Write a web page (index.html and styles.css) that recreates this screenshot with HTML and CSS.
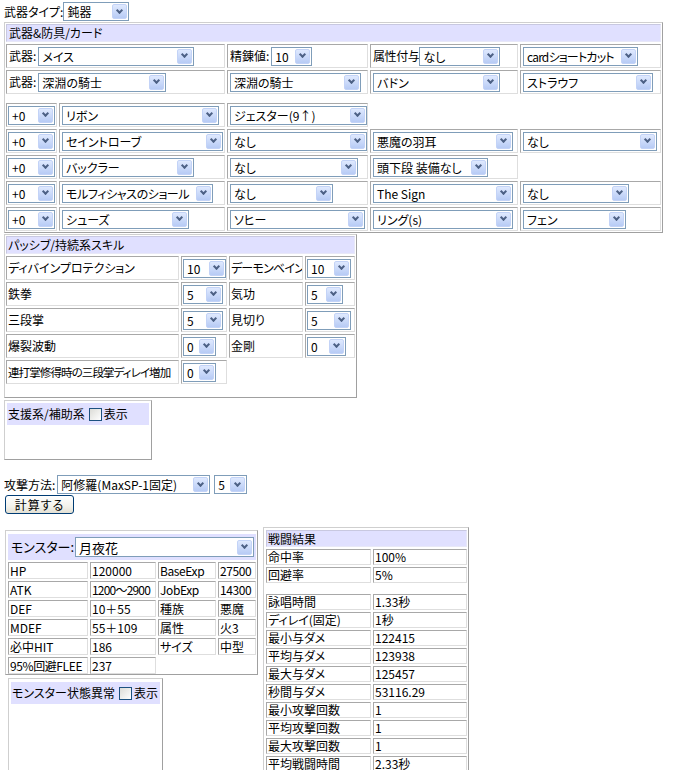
FILE: index.html
```html
<html lang="ja">
<head>
  <meta charset="UTF-8" />
  <title>計算機</title>
  <link rel="stylesheet" href="styles.css">
</head>
<body>

<!-- 武器タイプ -->
<div class="line">
  <label>武器タイプ:</label>
  <div class="sel w66"><span>鈍器</span><i></i></div>
</div>

<!-- 武器&防具/カード -->
<div class="box equip">
  <div class="cell head">武器&amp;防具/カード</div>

  <div class="cell span2"><label>武器:</label><div class="sel w156 ml"><span>メイス</span><i></i></div></div>
  <div class="cell"><label>精錬値:</label><div class="sel w41 ml"><span>10</span><i></i></div></div>
  <div class="cell"><label class="tight">属性付与</label><div class="sel w81"><span>なし</span><i></i></div></div>
  <div class="cell"><div class="sel w115"><span class="tighter">cardショートカット</span><i></i></div></div>

  <div class="cell span2"><label>武器:</label><div class="sel w128 ml"><span>深淵の騎士</span><i></i></div></div>
  <div class="cell"><div class="sel w131"><span>深淵の騎士</span><i></i></div></div>
  <div class="cell"><div class="sel w127"><span>バドン</span><i></i></div></div>
  <div class="cell"><div class="sel w130"><span>ストラウフ</span><i></i></div></div>

  <div class="spacer"></div>

  <div class="cell c1"><div class="sel w47"><span>+0</span><i></i></div></div>
  <div class="cell"><div class="sel w157"><span>リボン</span><i></i></div></div>
  <div class="cell"><div class="sel w137"><span>ジェスター(9↑)</span><i></i></div></div>
  <div class="blank span2"></div>

  <div class="cell c1"><div class="sel w47"><span>+0</span><i></i></div></div>
  <div class="cell"><div class="sel w161"><span>セイントローブ</span><i></i></div></div>
  <div class="cell"><div class="sel w137"><span>なし</span><i></i></div></div>
  <div class="cell"><div class="sel w140"><span>悪魔の羽耳</span><i></i></div></div>
  <div class="cell"><div class="sel w134"><span>なし</span><i></i></div></div>

  <div class="cell c1"><div class="sel w47"><span>+0</span><i></i></div></div>
  <div class="cell"><div class="sel w132"><span>バックラー</span><i></i></div></div>
  <div class="cell"><div class="sel w128"><span>なし</span><i></i></div></div>
  <div class="cell"><div class="sel w115"><span>頭下段 装備なし</span><i></i></div></div>
  <div class="blank"></div>

  <div class="cell c1"><div class="sel w47"><span>+0</span><i></i></div></div>
  <div class="cell"><div class="sel w151"><span class="tight">モルフィシャスのショール</span><i></i></div></div>
  <div class="cell"><div class="sel w103"><span>なし</span><i></i></div></div>
  <div class="cell"><div class="sel w140"><span>The Sign</span><i></i></div></div>
  <div class="cell"><div class="sel w106"><span>なし</span><i></i></div></div>

  <div class="cell c1"><div class="sel w47"><span>+0</span><i></i></div></div>
  <div class="cell"><div class="sel w127"><span>シューズ</span><i></i></div></div>
  <div class="cell"><div class="sel w135"><span>ソヒー</span><i></i></div></div>
  <div class="cell"><div class="sel w140"><span>リング(s)</span><i></i></div></div>
  <div class="cell"><div class="sel w103"><span>フェン</span><i></i></div></div>
</div>

<!-- パッシブ/持続系スキル -->
<div class="box skills">
  <div class="cell head">パッシブ/持続系スキル</div>

  <div class="cell">ディバインプロテクション</div>
  <div class="cell"><div class="sel w43"><span>10</span><i></i></div></div>
  <div class="cell tighter">デーモンベイン</div>
  <div class="cell"><div class="sel w44"><span>10</span><i></i></div></div>

  <div class="cell">鉄拳</div>
  <div class="cell"><div class="sel w40"><span>5</span><i></i></div></div>
  <div class="cell">気功</div>
  <div class="cell"><div class="sel w36"><span>5</span><i></i></div></div>

  <div class="cell">三段掌</div>
  <div class="cell"><div class="sel w40"><span>5</span><i></i></div></div>
  <div class="cell">見切り</div>
  <div class="cell"><div class="sel w44"><span>5</span><i></i></div></div>

  <div class="cell">爆裂波動</div>
  <div class="cell"><div class="sel w33"><span>0</span><i></i></div></div>
  <div class="cell">金剛</div>
  <div class="cell"><div class="sel w39"><span>0</span><i></i></div></div>

  <div class="cell small">連打掌修得時の三段掌ディレイ増加</div>
  <div class="cell"><div class="sel w33"><span>0</span><i></i></div></div>
  <div class="blank span2"></div>
</div>

<!-- 支援系/補助系 -->
<div class="panel support">
  <div class="panel-head">支援系/補助系 <span class="check"></span>表示</div>
</div>

<!-- 攻撃方法 -->
<div class="line attack">
  <label>攻撃方法:</label>
  <div class="sel w153 ml"><span>阿修羅(MaxSP-1固定)</span><i></i></div>
  <div class="sel w33 ml4"><span>5</span><i></i></div>
</div>
<button class="calc">計算する</button>

<div class="bottom">
  <div class="left-col">
    <!-- モンスター -->
    <div class="box monster">
      <div class="mon-head">
        <label>モンスター:</label>
        <div class="sel big w179"><span>月夜花</span><i></i></div>
      </div>
      <div class="cell">HP</div><div class="cell">120000</div><div class="cell tight">BaseExp</div><div class="cell tight">27500</div>
      <div class="cell">ATK</div><div class="cell tighter">1200～2900</div><div class="cell tight">JobExp</div><div class="cell tight">14300</div>
      <div class="cell">DEF</div><div class="cell">10＋55</div><div class="cell">種族</div><div class="cell">悪魔</div>
      <div class="cell">MDEF</div><div class="cell">55＋109</div><div class="cell">属性</div><div class="cell">火3</div>
      <div class="cell">必中HIT</div><div class="cell">186</div><div class="cell">サイズ</div><div class="cell">中型</div>
      <div class="cell tight">95%回避FLEE</div><div class="cell">237</div><div class="blank span2"></div>
    </div>

    <div class="panel status">
      <div class="panel-head">モンスター状態異常 <span class="check"></span>表示</div>
    </div>
  </div>

  <!-- 戦闘結果 -->
  <div class="box result">
    <div class="cell head">戦闘結果</div>
    <div class="cell">命中率</div><div class="cell">100%</div>
    <div class="cell">回避率</div><div class="cell">5%</div>
    <div class="spacer"></div>
    <div class="cell">詠唱時間</div><div class="cell">1.33秒</div>
    <div class="cell">ディレイ(固定)</div><div class="cell">1秒</div>
    <div class="cell">最小与ダメ</div><div class="cell">122415</div>
    <div class="cell">平均与ダメ</div><div class="cell">123938</div>
    <div class="cell">最大与ダメ</div><div class="cell">125457</div>
    <div class="cell">秒間与ダメ</div><div class="cell">53116.29</div>
    <div class="cell">最小攻撃回数</div><div class="cell">1</div>
    <div class="cell">平均攻撃回数</div><div class="cell">1</div>
    <div class="cell">最大攻撃回数</div><div class="cell">1</div>
    <div class="cell">平均戦闘時間</div><div class="cell">2.33秒</div>
    <div class="cell">経験値効率</div><div class="cell">0</div>
  </div>
</div>

</body>
</html>
```

FILE: styles.css
```css
/* ベース */
body {
  margin: 2px 4px;
  font-family: "Noto Sans CJK JP", "Liberation Sans", sans-serif;
  font-size: 12px;
  font-feature-settings: "palt";
  line-height: 16px;
  color: #000;
  background: #fff;
}
label {
  white-space: nowrap;
}
.line {
  display: flex;
  align-items: center;
  height: 19px;
}
.tight {
  letter-spacing: -0.4px;
}
.tighter {
  letter-spacing: -0.8px;
}

/* セレクト (XP風) */
.sel {
  display: flex;
  align-items: center;
  flex-shrink: 0;
  height: 19px;
  box-sizing: border-box;
  border: 1px solid #7f9db9;
  background: #fff;
}
.sel span {
  flex: 1;
  padding-left: 3px;
  overflow: hidden;
  white-space: nowrap;
  line-height: 17px;
}
.sel i {
  display: flex;
  align-items: center;
  justify-content: center;
  flex-shrink: 0;
  width: 15px;
  height: 15px;
  margin: 1px;
  box-sizing: border-box;
  border: 1px solid #c3d3f7;
  border-radius: 2px;
  background: linear-gradient(#dfe9fe, #b7cbf5);
}
.sel i::after {
  content: "";
  width: 3px;
  height: 3px;
  margin-top: -3px;
  border: solid #4d6185;
  border-width: 0 2px 2px 0;
  transform: rotate(45deg);
}
.sel.big {
  height: 20px;
  font-size: 13px;
}
.ml { margin-left: 2px; }
.ml4 { margin-left: 4px; }

.w33 { width: 33px; }
.w36 { width: 36px; }
.w39 { width: 39px; }
.w40 { width: 40px; }
.w41 { width: 41px; }
.w43 { width: 43px; }
.w44 { width: 44px; }
.w47 { width: 47px; }
.w66 { width: 66px; }
.w81 { width: 81px; }
.w103 { width: 103px; }
.w106 { width: 106px; }
.w115 { width: 115px; }
.w127 { width: 127px; }
.w128 { width: 128px; }
.w130 { width: 130px; }
.w131 { width: 131px; }
.w132 { width: 132px; }
.w134 { width: 134px; }
.w135 { width: 135px; }
.w137 { width: 137px; }
.w140 { width: 140px; }
.w151 { width: 151px; }
.w153 { width: 153px; }
.w156 { width: 156px; }
.w157 { width: 157px; }
.w161 { width: 161px; }
.w179 { width: 179px; }

/* テーブル風ボックス */
.box {
  display: grid;
  width: max-content;
  gap: 2px;
  padding: 1px;
  border: 1px solid;
  border-color: #cfcfcf #a0a0a0 #a0a0a0 #cfcfcf;
}
.cell {
  display: flex;
  align-items: center;
  box-sizing: border-box;
  height: 24px;
  padding: 0 1px;
  border: 1px solid;
  border-color: #a8a8a8 #dedede #dedede #a8a8a8;
  white-space: nowrap;
  overflow: hidden;
}
.head {
  grid-column: 1 / -1;
  height: 18px;
  background: #e0e0ff;
  border-color: #c8c8e0 #e8e8f8 #e8e8f8 #c8c8e0;
}
.span2 {
  grid-column: span 2;
}
.spacer {
  grid-column: 1 / -1;
  height: 5px;
}

.equip {
  margin-top: 1px;
  grid-template-columns: 51px 166px 141px 148px 141px;
}
.equip .cell {
  padding: 0 0 0 2px;
}
.equip .cell.c1 {
  padding-left: 1px;
}

.skills {
  margin-top: 1px;
  padding-bottom: 13px;
  grid-template-columns: 173px 46px 74px 50px;
}
.skills .small {
  font-size: 11.5px;
  letter-spacing: -0.9px;
}

/* パネル */
.panel {
  box-sizing: border-box;
  padding: 2px;
  border: 1px solid;
  border-color: #cfcfcf #a0a0a0 #a0a0a0 #cfcfcf;
}
.panel-head {
  display: flex;
  align-items: center;
  height: 22px;
  padding-left: 1px;
  background: #e0e0ff;
  white-space: nowrap;
}
.check {
  width: 13px;
  height: 13px;
  box-sizing: border-box;
  margin: 0 2px 0 4px;
  border: 1px solid #1c5180;
  background: linear-gradient(135deg, #dcdcd7, #fff);
}
.support {
  width: 148px;
  height: 60px;
  margin-top: 2px;
}

.attack {
  margin-top: 15px;
}
.calc {
  display: block;
  width: 69px;
  height: 19px;
  margin: 1px 0 0 1px;
  padding: 0;
  font: inherit;
  font-feature-settings: "palt";
  letter-spacing: 1px;
  border: 1px solid #003c74;
  border-radius: 3px;
  background: linear-gradient(#ffffff, #f3f2ec 60%, #e3e0d4);
}

/* 下段 */
.bottom {
  display: flex;
  align-items: flex-start;
  gap: 5px;
  margin-top: 13px;
}
.left-col {
  padding-top: 3px;
  margin-left: 1px;
}
.monster {
  padding: 3px 1px 0 2px;
  grid-template-columns: 80px 66px 58px 38px;
}
.monster .cell {
  height: 17px;
}
.mon-head {
  grid-column: 1 / -1;
  display: flex;
  align-items: center;
  justify-content: space-between;
  height: 26px;
  padding: 0 2px 0 3px;
  box-sizing: border-box;
  background: #e0e0ff;
  font-size: 13px;
}
.status {
  width: 155px;
  height: 110px;
  margin: 3px 0 0 3px;
  padding: 3px 2px;
}

.result {
  padding: 2px 1px 2px 2px;
  grid-template-columns: 105px 94px;
}
.result .cell {
  height: 16px;
}
.result .head {
  height: 17px;
}
.result .spacer {
  height: 7px;
}
```
